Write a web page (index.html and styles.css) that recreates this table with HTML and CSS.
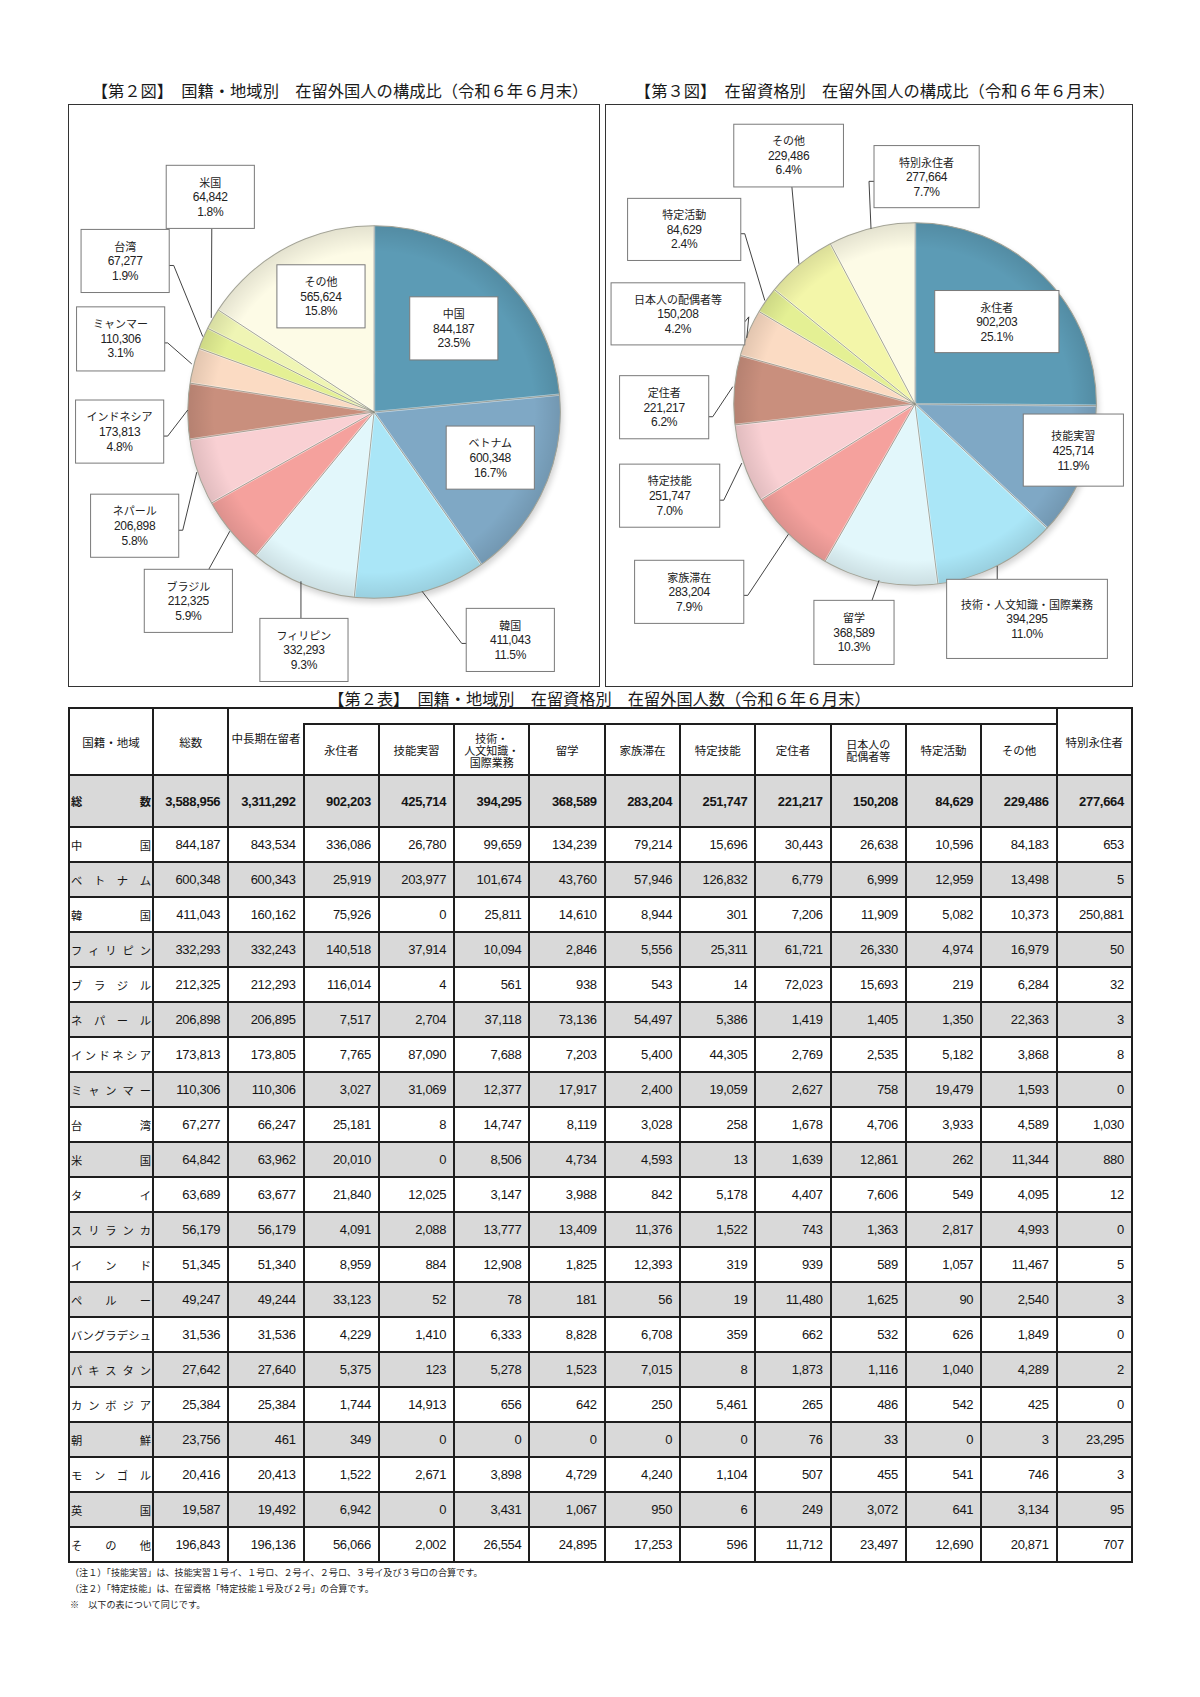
FILE: index.html
```html
<!DOCTYPE html>
<html lang="ja">
<head>
<meta charset="utf-8">
<title>在留外国人統計</title>
<link rel="stylesheet" href="styles.css">
</head>
<body>
<div class="page">
  <div class="charts">
    <section class="fig fig2">
      <h2 class="fig-title">【第２図】　国籍・地域別　在留外国人の構成比（令和６年６月末）</h2>
      <div class="chart-box">
        <svg viewBox="1.5 1.5 529 580" xmlns="http://www.w3.org/2000/svg">
          <defs>
            <filter id="sh2" x="-20%" y="-20%" width="140%" height="140%"><feGaussianBlur stdDeviation="3"/></filter>
            <radialGradient id="rim2"><stop offset="0.86" stop-color="#000" stop-opacity="0"/><stop offset="1" stop-color="#000" stop-opacity="0.10"/></radialGradient>
          </defs>
          <g transform="translate(306 308)">
            <circle class="shadow" r="186" transform="translate(2 4)" filter="url(#sh2)"/>
            <g class="slices" stroke-width="186">
              <circle r="93" pathLength="100" stroke="#5c9bb5" stroke-dasharray="23.57 100" transform="rotate(-90)"/>
              <circle r="93" pathLength="100" stroke="#7fa8c5" stroke-dasharray="16.78 100" transform="rotate(-5.33)"/>
              <circle r="93" pathLength="100" stroke="#aae6f7" stroke-dasharray="11.50 100" transform="rotate(54.9)"/>
              <circle r="93" pathLength="100" stroke="#e2f7fb" stroke-dasharray="9.31 100" transform="rotate(96.12)"/>
              <circle r="93" pathLength="100" stroke="#f5a19d" stroke-dasharray="5.97 100" transform="rotate(129.46)"/>
              <circle r="93" pathLength="100" stroke="#f9d0d3" stroke-dasharray="5.81 100" transform="rotate(150.77)"/>
              <circle r="93" pathLength="100" stroke="#c98f7d" stroke-dasharray="4.89 100" transform="rotate(171.5)"/>
              <circle r="93" pathLength="100" stroke="#fbdbc3" stroke-dasharray="3.12 100" transform="rotate(188.93)"/>
              <circle r="93" pathLength="100" stroke="#e4f094" stroke-dasharray="1.92 100" transform="rotate(199.98)"/>
              <circle r="93" pathLength="100" stroke="#eff5b4" stroke-dasharray="1.86 100" transform="rotate(206.71)"/>
              <circle r="93" pathLength="100" stroke="#fdfbe6" stroke-dasharray="15.78 100" transform="rotate(213.23)"/>
            </g>
            <circle r="186" fill="url(#rim2)"/>
            <g class="sep-hi">
              <line y2="-186"/><line y2="-186" transform="rotate(84.67)"/><line y2="-186" transform="rotate(144.9)"/><line y2="-186" transform="rotate(186.12)"/><line y2="-186" transform="rotate(219.46)"/><line y2="-186" transform="rotate(240.77)"/><line y2="-186" transform="rotate(261.5)"/><line y2="-186" transform="rotate(278.93)"/><line y2="-186" transform="rotate(289.98)"/><line y2="-186" transform="rotate(296.71)"/><line y2="-186" transform="rotate(303.23)"/>
            </g>
            <g class="sep">
              <line y2="-186"/><line y2="-186" transform="rotate(84.67)"/><line y2="-186" transform="rotate(144.9)"/><line y2="-186" transform="rotate(186.12)"/><line y2="-186" transform="rotate(219.46)"/><line y2="-186" transform="rotate(240.77)"/><line y2="-186" transform="rotate(261.5)"/><line y2="-186" transform="rotate(278.93)"/><line y2="-186" transform="rotate(289.98)"/><line y2="-186" transform="rotate(296.71)"/><line y2="-186" transform="rotate(303.23)"/>
            </g>
            <circle class="rim" r="186"/>
          </g>
          <g class="ld">
            <polyline points="144,125 143.5,214"/>
            <polyline points="101,161.7 106,161.7 135,232.7"/>
            <polyline points="96,239 100,239 124,260"/>
            <polyline points="96,332 100,332 120,306"/>
            <polyline points="110.5,426 115,426 129,368"/>
            <polyline points="141,465 162,427"/>
            <polyline points="233,514 233,477"/>
            <polyline points="398,539 393.5,539 354,487"/>
          </g>
          <g class="lbl">
            <rect x="98.5" y="61.7" width="88" height="63"/>
            <text><tspan class="nm" x="142.5" y="83">米国</tspan><tspan class="nv" x="142.5" y="97.7">64,842</tspan><tspan class="nv" x="142.5" y="112.2">1.8%</tspan></text>
            <rect x="13.5" y="125.7" width="88" height="63"/>
            <text><tspan class="nm" x="57.5" y="147">台湾</tspan><tspan class="nv" x="57.5" y="161.7">67,277</tspan><tspan class="nv" x="57.5" y="176.2">1.9%</tspan></text>
            <rect x="9" y="203" width="88" height="64"/>
            <text><tspan class="nm" x="53" y="224.3">ミャンマー</tspan><tspan class="nv" x="53" y="239">110,306</tspan><tspan class="nv" x="53" y="253.5">3.1%</tspan></text>
            <rect x="209" y="161" width="88" height="63"/>
            <text><tspan class="nm" x="253" y="182.3">その他</tspan><tspan class="nv" x="253" y="197">565,624</tspan><tspan class="nv" x="253" y="211.5">15.8%</tspan></text>
            <rect x="341.6" y="193" width="88" height="63"/>
            <text><tspan class="nm" x="385.6" y="214.3">中国</tspan><tspan class="nv" x="385.6" y="229">844,187</tspan><tspan class="nv" x="385.6" y="243.5">23.5%</tspan></text>
            <rect x="8" y="296" width="88" height="63"/>
            <text><tspan class="nm" x="52" y="317.3">インドネシア</tspan><tspan class="nv" x="52" y="332">173,813</tspan><tspan class="nv" x="52" y="346.5">4.8%</tspan></text>
            <rect x="378" y="322" width="88" height="63"/>
            <text><tspan class="nm" x="422" y="343.3">ベトナム</tspan><tspan class="nv" x="422" y="358">600,348</tspan><tspan class="nv" x="422" y="372.5">16.7%</tspan></text>
            <rect x="23" y="390" width="88" height="63"/>
            <text><tspan class="nm" x="67" y="411.3">ネパール</tspan><tspan class="nv" x="67" y="426">206,898</tspan><tspan class="nv" x="67" y="440.5">5.8%</tspan></text>
            <rect x="76.6" y="465" width="88" height="63"/>
            <text><tspan class="nm" x="120.6" y="486.3">ブラジル</tspan><tspan class="nv" x="120.6" y="501">212,325</tspan><tspan class="nv" x="120.6" y="515.5">5.9%</tspan></text>
            <rect x="192" y="514" width="88" height="63"/>
            <text><tspan class="nm" x="236" y="535.3">フィリピン</tspan><tspan class="nv" x="236" y="550">332,293</tspan><tspan class="nv" x="236" y="564.5">9.3%</tspan></text>
            <rect x="398" y="504" width="88" height="63"/>
            <text><tspan class="nm" x="442" y="525.3">韓国</tspan><tspan class="nv" x="442" y="540">411,043</tspan><tspan class="nv" x="442" y="554.5">11.5%</tspan></text>
          </g>
        </svg>
      </div>
    </section>
    <section class="fig fig3">
      <h2 class="fig-title">【第３図】　在留資格別　在留外国人の構成比（令和６年６月末）</h2>
      <div class="chart-box">
        <svg viewBox="1.5 1.5 525 580" xmlns="http://www.w3.org/2000/svg">
          <defs>
            <filter id="sh3" x="-20%" y="-20%" width="140%" height="140%"><feGaussianBlur stdDeviation="3"/></filter>
            <radialGradient id="rim3"><stop offset="0.86" stop-color="#000" stop-opacity="0"/><stop offset="1" stop-color="#000" stop-opacity="0.10"/></radialGradient>
          </defs>
          <g transform="translate(310 300)">
            <circle class="shadow" r="181" transform="translate(2 4)" filter="url(#sh3)"/>
            <g class="slices" stroke-width="181">
              <circle r="90.5" pathLength="100" stroke="#5c9bb5" stroke-dasharray="25.19 100" transform="rotate(-90)"/>
              <circle r="90.5" pathLength="100" stroke="#7fa8c5" stroke-dasharray="11.91 100" transform="rotate(0.5)"/>
              <circle r="90.5" pathLength="100" stroke="#aae6f7" stroke-dasharray="11.04 100" transform="rotate(43.2)"/>
              <circle r="90.5" pathLength="100" stroke="#e2f7fb" stroke-dasharray="10.32 100" transform="rotate(82.76)"/>
              <circle r="90.5" pathLength="100" stroke="#f5a19d" stroke-dasharray="7.94 100" transform="rotate(119.74)"/>
              <circle r="90.5" pathLength="100" stroke="#f9d0d3" stroke-dasharray="7.06 100" transform="rotate(148.14)"/>
              <circle r="90.5" pathLength="100" stroke="#c98f7d" stroke-dasharray="6.21 100" transform="rotate(173.38)"/>
              <circle r="90.5" pathLength="100" stroke="#fbdbc3" stroke-dasharray="4.24 100" transform="rotate(195.55)"/>
              <circle r="90.5" pathLength="100" stroke="#e4f094" stroke-dasharray="2.41 100" transform="rotate(210.64)"/>
              <circle r="90.5" pathLength="100" stroke="#f3f6a9" stroke-dasharray="6.44 100" transform="rotate(219.13)"/>
              <circle r="90.5" pathLength="100" stroke="#fdfbe6" stroke-dasharray="7.76 100" transform="rotate(242.14)"/>
            </g>
            <circle r="181" fill="url(#rim3)"/>
            <g class="sep-hi">
              <line y2="-181"/><line y2="-181" transform="rotate(90.5)"/><line y2="-181" transform="rotate(133.2)"/><line y2="-181" transform="rotate(172.76)"/><line y2="-181" transform="rotate(209.74)"/><line y2="-181" transform="rotate(238.14)"/><line y2="-181" transform="rotate(263.38)"/><line y2="-181" transform="rotate(285.55)"/><line y2="-181" transform="rotate(300.64)"/><line y2="-181" transform="rotate(309.13)"/><line y2="-181" transform="rotate(332.14)"/>
            </g>
            <g class="sep">
              <line y2="-181"/><line y2="-181" transform="rotate(90.5)"/><line y2="-181" transform="rotate(133.2)"/><line y2="-181" transform="rotate(172.76)"/><line y2="-181" transform="rotate(209.74)"/><line y2="-181" transform="rotate(238.14)"/><line y2="-181" transform="rotate(263.38)"/><line y2="-181" transform="rotate(285.55)"/><line y2="-181" transform="rotate(300.64)"/><line y2="-181" transform="rotate(309.13)"/><line y2="-181" transform="rotate(332.14)"/>
            </g>
            <circle class="rim" r="181"/>
          </g>
          <g class="ld">
            <polyline points="187,83 194,160"/>
            <polyline points="269,77.7 264,77.7 266,125"/>
            <polyline points="136,130 140,130 160,196.7"/>
            <polyline points="140,218 144,213 142,234"/>
            <polyline points="104,312.7 108,312.7 128,282.7"/>
            <polyline points="115,396 119,396 137,359"/>
            <polyline points="139,491 143,491 183.5,430"/>
            <polyline points="267,496 274,476"/>
            <polyline points="392,475 392,461.7"/>
          </g>
          <g class="lbl">
            <rect x="129" y="20.7" width="109.5" height="62.6"/>
            <text><tspan class="nm" x="183.75" y="41.7">その他</tspan><tspan class="nv" x="183.75" y="56.2">229,486</tspan><tspan class="nv" x="183.75" y="70.7">6.4%</tspan></text>
            <rect x="269" y="42" width="105" height="62"/>
            <text><tspan class="nm" x="321.5" y="63">特別永住者</tspan><tspan class="nv" x="321.5" y="77.5">277,664</tspan><tspan class="nv" x="321.5" y="92">7.7%</tspan></text>
            <rect x="23" y="94.7" width="113" height="62"/>
            <text><tspan class="nm" x="79.5" y="115.7">特定活動</tspan><tspan class="nv" x="79.5" y="130.2">84,629</tspan><tspan class="nv" x="79.5" y="144.7">2.4%</tspan></text>
            <rect x="6.5" y="179" width="133.5" height="62"/>
            <text><tspan class="nm" x="73.25" y="200">日本人の配偶者等</tspan><tspan class="nv" x="73.25" y="214.5">150,208</tspan><tspan class="nv" x="73.25" y="229">4.2%</tspan></text>
            <rect x="329.6" y="186.7" width="124" height="62"/>
            <text><tspan class="nm" x="391.6" y="207.7">永住者</tspan><tspan class="nv" x="391.6" y="222.2">902,203</tspan><tspan class="nv" x="391.6" y="236.7">25.1%</tspan></text>
            <rect x="15" y="271.7" width="89" height="63"/>
            <text><tspan class="nm" x="59.5" y="293">定住者</tspan><tspan class="nv" x="59.5" y="307.7">221,217</tspan><tspan class="nv" x="59.5" y="322.2">6.2%</tspan></text>
            <rect x="418" y="310" width="100" height="72"/>
            <text><tspan class="nm" x="468" y="335.5">技能実習</tspan><tspan class="nv" x="468" y="350.5">425,714</tspan><tspan class="nv" x="468" y="365.5">11.9%</tspan></text>
            <rect x="15" y="360" width="100" height="63"/>
            <text><tspan class="nm" x="65" y="381.3">特定技能</tspan><tspan class="nv" x="65" y="396">251,747</tspan><tspan class="nv" x="65" y="410.5">7.0%</tspan></text>
            <rect x="30" y="456" width="109" height="63"/>
            <text><tspan class="nm" x="84.5" y="477.3">家族滞在</tspan><tspan class="nv" x="84.5" y="492">283,204</tspan><tspan class="nv" x="84.5" y="506.5">7.9%</tspan></text>
            <rect x="209" y="496" width="80" height="64"/>
            <text><tspan class="nm" x="249" y="517.8">留学</tspan><tspan class="nv" x="249" y="532.5">368,589</tspan><tspan class="nv" x="249" y="547">10.3%</tspan></text>
            <rect x="341.5" y="475" width="160.5" height="79"/>
            <text><tspan class="nm" x="421.75" y="504.3">技術・人文知識・国際業務</tspan><tspan class="nv" x="421.75" y="519">394,295</tspan><tspan class="nv" x="421.75" y="533.5">11.0%</tspan></text>
          </g>
        </svg>
      </div>
    </section>
  </div>

  <h2 class="table-title">【第２表】　国籍・地域別　在留資格別　在留外国人数（令和６年６月末）</h2>
  <table class="data">
    <colgroup>
      <col class="c0"><col class="cn"><col class="cn"><col class="cn"><col class="cn"><col class="cn"><col class="cn"><col class="cn"><col class="cn"><col class="cn"><col class="cn"><col class="cn"><col class="cn"><col class="cn">
    </colgroup>
    <thead>
      <tr class="h1"><th rowspan="2">国籍・地域</th><th rowspan="2">総数</th><th colspan="11" class="strip"></th><th rowspan="2">特別永住者</th></tr>
      <tr class="h2"><th class="mid">中長期在留者</th><th>永住者</th><th>技能実習</th><th class="tri">技術・<br>人文知識・<br>国際業務</th><th>留学</th><th>家族滞在</th><th>特定技能</th><th>定住者</th><th class="duo">日本人の<br>配偶者等</th><th>特定活動</th><th>その他</th></tr>
    </thead>
    <tbody>
      <tr class="total"><td class="name"><div class="nm"><span>総</span><span>数</span></div></td><td>3,588,956</td><td>3,311,292</td><td>902,203</td><td>425,714</td><td>394,295</td><td>368,589</td><td>283,204</td><td>251,747</td><td>221,217</td><td>150,208</td><td>84,629</td><td>229,486</td><td>277,664</td></tr>
      <tr><td class="name"><div class="nm"><span>中</span><span>国</span></div></td><td>844,187</td><td>843,534</td><td>336,086</td><td>26,780</td><td>99,659</td><td>134,239</td><td>79,214</td><td>15,696</td><td>30,443</td><td>26,638</td><td>10,596</td><td>84,183</td><td>653</td></tr>
      <tr class="alt"><td class="name"><div class="nm"><span>ベ</span><span>ト</span><span>ナ</span><span>ム</span></div></td><td>600,348</td><td>600,343</td><td>25,919</td><td>203,977</td><td>101,674</td><td>43,760</td><td>57,946</td><td>126,832</td><td>6,779</td><td>6,999</td><td>12,959</td><td>13,498</td><td>5</td></tr>
      <tr><td class="name"><div class="nm"><span>韓</span><span>国</span></div></td><td>411,043</td><td>160,162</td><td>75,926</td><td>0</td><td>25,811</td><td>14,610</td><td>8,944</td><td>301</td><td>7,206</td><td>11,909</td><td>5,082</td><td>10,373</td><td>250,881</td></tr>
      <tr class="alt"><td class="name"><div class="nm"><span>フ</span><span>ィ</span><span>リ</span><span>ピ</span><span>ン</span></div></td><td>332,293</td><td>332,243</td><td>140,518</td><td>37,914</td><td>10,094</td><td>2,846</td><td>5,556</td><td>25,311</td><td>61,721</td><td>26,330</td><td>4,974</td><td>16,979</td><td>50</td></tr>
      <tr><td class="name"><div class="nm"><span>ブ</span><span>ラ</span><span>ジ</span><span>ル</span></div></td><td>212,325</td><td>212,293</td><td>116,014</td><td>4</td><td>561</td><td>938</td><td>543</td><td>14</td><td>72,023</td><td>15,693</td><td>219</td><td>6,284</td><td>32</td></tr>
      <tr class="alt"><td class="name"><div class="nm"><span>ネ</span><span>パ</span><span>ー</span><span>ル</span></div></td><td>206,898</td><td>206,895</td><td>7,517</td><td>2,704</td><td>37,118</td><td>73,136</td><td>54,497</td><td>5,386</td><td>1,419</td><td>1,405</td><td>1,350</td><td>22,363</td><td>3</td></tr>
      <tr><td class="name"><div class="nm"><span>イ</span><span>ン</span><span>ド</span><span>ネ</span><span>シ</span><span>ア</span></div></td><td>173,813</td><td>173,805</td><td>7,765</td><td>87,090</td><td>7,688</td><td>7,203</td><td>5,400</td><td>44,305</td><td>2,769</td><td>2,535</td><td>5,182</td><td>3,868</td><td>8</td></tr>
      <tr class="alt"><td class="name"><div class="nm"><span>ミ</span><span>ャ</span><span>ン</span><span>マ</span><span>ー</span></div></td><td>110,306</td><td>110,306</td><td>3,027</td><td>31,069</td><td>12,377</td><td>17,917</td><td>2,400</td><td>19,059</td><td>2,627</td><td>758</td><td>19,479</td><td>1,593</td><td>0</td></tr>
      <tr><td class="name"><div class="nm"><span>台</span><span>湾</span></div></td><td>67,277</td><td>66,247</td><td>25,181</td><td>8</td><td>14,747</td><td>8,119</td><td>3,028</td><td>258</td><td>1,678</td><td>4,706</td><td>3,933</td><td>4,589</td><td>1,030</td></tr>
      <tr class="alt"><td class="name"><div class="nm"><span>米</span><span>国</span></div></td><td>64,842</td><td>63,962</td><td>20,010</td><td>0</td><td>8,506</td><td>4,734</td><td>4,593</td><td>13</td><td>1,639</td><td>12,861</td><td>262</td><td>11,344</td><td>880</td></tr>
      <tr><td class="name"><div class="nm"><span>タ</span><span>イ</span></div></td><td>63,689</td><td>63,677</td><td>21,840</td><td>12,025</td><td>3,147</td><td>3,988</td><td>842</td><td>5,178</td><td>4,407</td><td>7,606</td><td>549</td><td>4,095</td><td>12</td></tr>
      <tr class="alt"><td class="name"><div class="nm"><span>ス</span><span>リ</span><span>ラ</span><span>ン</span><span>カ</span></div></td><td>56,179</td><td>56,179</td><td>4,091</td><td>2,088</td><td>13,777</td><td>13,409</td><td>11,376</td><td>1,522</td><td>743</td><td>1,363</td><td>2,817</td><td>4,993</td><td>0</td></tr>
      <tr><td class="name"><div class="nm"><span>イ</span><span>ン</span><span>ド</span></div></td><td>51,345</td><td>51,340</td><td>8,959</td><td>884</td><td>12,908</td><td>1,825</td><td>12,393</td><td>319</td><td>939</td><td>589</td><td>1,057</td><td>11,467</td><td>5</td></tr>
      <tr class="alt"><td class="name"><div class="nm"><span>ペ</span><span>ル</span><span>ー</span></div></td><td>49,247</td><td>49,244</td><td>33,123</td><td>52</td><td>78</td><td>181</td><td>56</td><td>19</td><td>11,480</td><td>1,625</td><td>90</td><td>2,540</td><td>3</td></tr>
      <tr><td class="name"><div class="nm"><span>バ</span><span>ン</span><span>グ</span><span>ラ</span><span>デ</span><span>シ</span><span>ュ</span></div></td><td>31,536</td><td>31,536</td><td>4,229</td><td>1,410</td><td>6,333</td><td>8,828</td><td>6,708</td><td>359</td><td>662</td><td>532</td><td>626</td><td>1,849</td><td>0</td></tr>
      <tr class="alt"><td class="name"><div class="nm"><span>パ</span><span>キ</span><span>ス</span><span>タ</span><span>ン</span></div></td><td>27,642</td><td>27,640</td><td>5,375</td><td>123</td><td>5,278</td><td>1,523</td><td>7,015</td><td>8</td><td>1,873</td><td>1,116</td><td>1,040</td><td>4,289</td><td>2</td></tr>
      <tr><td class="name"><div class="nm"><span>カ</span><span>ン</span><span>ボ</span><span>ジ</span><span>ア</span></div></td><td>25,384</td><td>25,384</td><td>1,744</td><td>14,913</td><td>656</td><td>642</td><td>250</td><td>5,461</td><td>265</td><td>486</td><td>542</td><td>425</td><td>0</td></tr>
      <tr class="alt"><td class="name"><div class="nm"><span>朝</span><span>鮮</span></div></td><td>23,756</td><td>461</td><td>349</td><td>0</td><td>0</td><td>0</td><td>0</td><td>0</td><td>76</td><td>33</td><td>0</td><td>3</td><td>23,295</td></tr>
      <tr><td class="name"><div class="nm"><span>モ</span><span>ン</span><span>ゴ</span><span>ル</span></div></td><td>20,416</td><td>20,413</td><td>1,522</td><td>2,671</td><td>3,898</td><td>4,729</td><td>4,240</td><td>1,104</td><td>507</td><td>455</td><td>541</td><td>746</td><td>3</td></tr>
      <tr class="alt"><td class="name"><div class="nm"><span>英</span><span>国</span></div></td><td>19,587</td><td>19,492</td><td>6,942</td><td>0</td><td>3,431</td><td>1,067</td><td>950</td><td>6</td><td>249</td><td>3,072</td><td>641</td><td>3,134</td><td>95</td></tr>
      <tr><td class="name"><div class="nm"><span>そ</span><span>の</span><span>他</span></div></td><td>196,843</td><td>196,136</td><td>56,066</td><td>2,002</td><td>26,554</td><td>24,895</td><td>17,253</td><td>596</td><td>11,712</td><td>23,497</td><td>12,690</td><td>20,871</td><td>707</td></tr>
    </tbody>
  </table>
  <div class="notes">
    <p>（注１）「技能実習」は、技能実習１号イ、１号ロ、２号イ、２号ロ、３号イ及び３号ロの合算です。</p>
    <p>（注２）「特定技能」は、在留資格「特定技能１号及び２号」の合算です。</p>
    <p>※　以下の表について同じです。</p>
  </div>
</div>
</body>
</html>
```

FILE: styles.css
```css
html, body {
  margin: 0;
  padding: 0;
  background: #ffffff;
}

body {
  font-family: "Noto Sans CJK JP", "Noto Sans", sans-serif;
  color: #1a1a1a;
}

.page {
  width: 1200px;
  height: 1697px;
  box-sizing: border-box;
  padding: 80px 0 0 68px;
  overflow: hidden;
}

/* ---------- charts ---------- */
.charts {
  display: flex;
  gap: 5px;
}

.fig {
  display: flex;
  flex-direction: column;
}

.fig2 { width: 532px; }
.fig3 { width: 528px; }

.fig-title {
  margin: 0 0 4px;
  padding-left: 12px;
  height: 20px;
  font-size: 16.3px;
  line-height: 20px;
  font-weight: 400;
  text-align: center;
  white-space: nowrap;
  color: #1a1a1a;
}

.chart-box {
  height: 583px;
  box-sizing: border-box;
  border: 1.5px solid #333333;
  background: #ffffff;
}

.chart-box svg {
  display: block;
  width: 100%;
  height: 100%;
}

.slices circle {
  fill: none;
}

.shadow {
  fill: #000000;
  opacity: 0.18;
}

.sep-hi line {
  stroke: #ffffff;
  stroke-opacity: 0.55;
  stroke-width: 2.2;
}

.sep line {
  stroke: #8d8d80;
  stroke-width: 0.7;
}

.rim {
  fill: none;
  stroke: #a3a396;
  stroke-width: 1;
}

.ld polyline {
  fill: none;
  stroke: #2e2e2e;
  stroke-width: 0.9;
}

.lbl rect {
  fill: #ffffff;
  stroke: #7a7a7a;
  stroke-width: 1;
}

.lbl text {
  text-anchor: middle;
  fill: #222222;
}

.lbl .nm {
  font-family: "Noto Sans CJK JP", sans-serif;
  font-size: 11px;
}

.lbl .nv {
  font-family: "Liberation Sans", "Noto Sans CJK JP", sans-serif;
  font-size: 12px;
  letter-spacing: -0.3px;
}

/* ---------- table ---------- */
.table-title {
  width: 1063px;
  margin: 4px 0 1px;
  height: 15px;
  font-size: 16.2px;
  line-height: 15px;
  font-weight: 400;
  text-align: center;
  white-space: nowrap;
  color: #1a1a1a;
}

.data {
  width: 1063px;
  border-collapse: collapse;
  table-layout: fixed;
  color: #151515;
}

.data .c0 { width: 84px; }
.data .cn { width: 75.3px; }

.data th,
.data td {
  border: 2px solid #1e1e1e;
  padding: 0;
}

.data th {
  font-weight: 400;
  font-size: 11.5px;
  line-height: 12px;
  text-align: center;
  vertical-align: middle;
}

.data .h1 th { height: 14px; }
.data .h2 th { height: 49px; }

.data th.strip {
  border-bottom: none;
}

.data th.mid {
  border-top: none;
  vertical-align: top;
  padding-top: 8px;
  height: 41px;
}

.data th.tri,
.data th.duo {
  font-size: 11px;
}

.data td {
  height: 33px;
  text-align: right;
  padding-right: 7px;
  font-family: "Liberation Sans", sans-serif;
  font-size: 13px;
  letter-spacing: -0.3px;
  vertical-align: middle;
  background: #ffffff;
}

.data tr.alt td,
.data tr.total td {
  background: #d9d9d9;
}

.data tr.total td {
  height: 50px;
  font-weight: 700;
}

.data td.name {
  text-align: left;
  padding: 0 1px;
  letter-spacing: 0;
  font-family: "Noto Sans CJK JP", sans-serif;
  font-size: 11.3px;
}

.nm {
  display: flex;
  justify-content: space-between;
}

/* ---------- notes ---------- */
.notes {
  margin-top: 1px;
  padding-left: 2px;
  font-size: 9.1px;
  line-height: 16px;
  color: #222222;
}

.notes p {
  margin: 0;
  white-space: nowrap;
}
```
